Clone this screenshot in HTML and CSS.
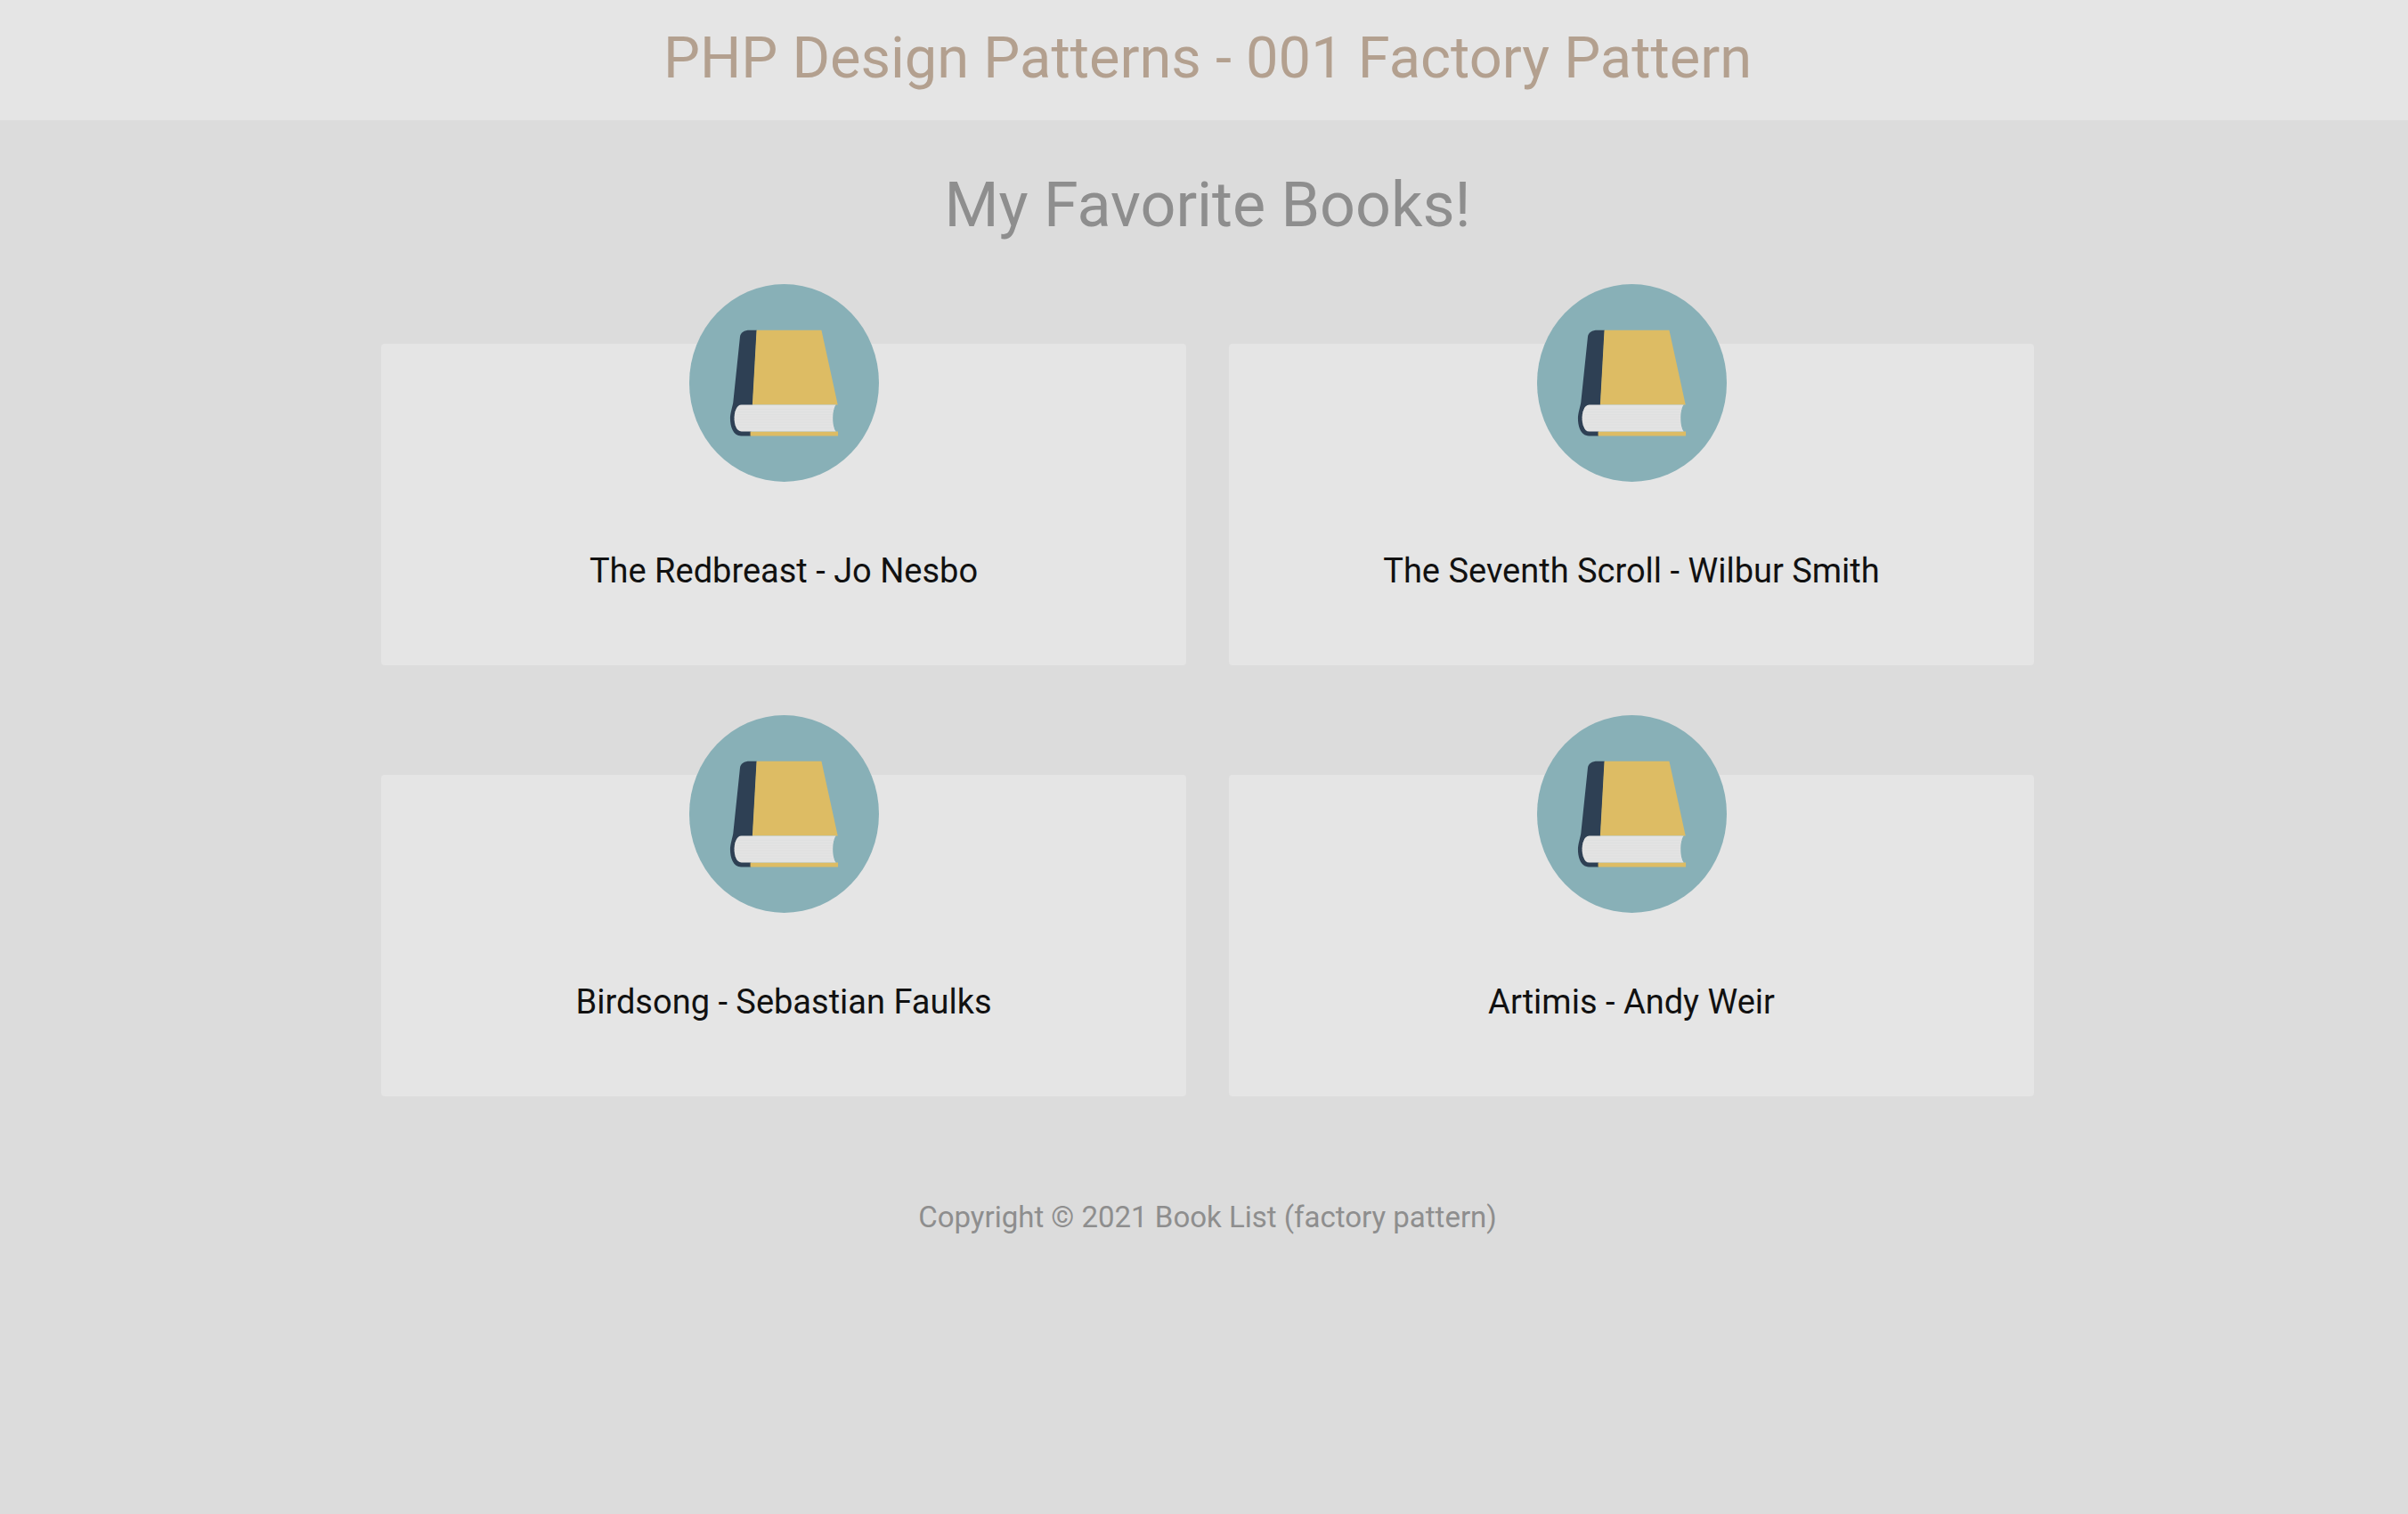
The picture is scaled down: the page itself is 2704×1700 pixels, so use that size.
FILE: index.html
```html
<!DOCTYPE html>
<html lang="en">
<head>
<meta charset="utf-8">
<meta name="viewport" content="width=device-width, initial-scale=1">
<title>PHP Design Patterns - 001 Factory Pattern</title>
<link rel="stylesheet" href="styles.css">
</head>
<body>
<svg class="sprite" aria-hidden="true">
  <symbol id="book" viewBox="42 42 640 668" preserveAspectRatio="none">
    <ellipse cx="362" cy="376" rx="320" ry="334" fill="#88b0b7"/>
    <path d="M246 198H270L256 450L250 555H217C190 555 180 524 180 495C180 479 188 455 190 442L213 222C214 206 228 198 246 198Z" fill="#2e4054"/>
    <path d="M269 198H488L543 450H255Z" fill="#ddbc64"/>
    <path d="M248 540H544V555H248Z" fill="#ddbc64"/>
    <path d="M218 450H537C523 465 523 525 537 540H218C186 540 186 450 218 450Z" fill="#e3e3e3"/>
    <path d="M202 465H530M196 474H528M195 483H526M194 491H525M194 500H525M195 509H526M197 518H528M203 527H531" stroke="#dcdede" stroke-width="2"/>
  </symbol>
</svg>
<header class="site-header">
  <h1 class="site-title">PHP Design Patterns - 001 Factory Pattern</h1>
</header>
<main class="content">
  <h2 class="section-title">My Favorite Books!</h2>
  <ul class="book-grid">
    <li class="book-card"><svg class="book-icon" aria-hidden="true"><use href="#book"/></svg><p class="book-name">The Redbreast - Jo Nesbo</p></li>
    <li class="book-card"><svg class="book-icon" aria-hidden="true"><use href="#book"/></svg><p class="book-name">The Seventh Scroll - Wilbur Smith</p></li>
    <li class="book-card"><svg class="book-icon" aria-hidden="true"><use href="#book"/></svg><p class="book-name">Birdsong - Sebastian Faulks</p></li>
    <li class="book-card"><svg class="book-icon" aria-hidden="true"><use href="#book"/></svg><p class="book-name">Artimis - Andy Weir</p></li>
  </ul>
</main>
<footer class="site-footer">Copyright © 2021 Book List (factory pattern)</footer>
</body>
</html>
```
FILE: styles.css
```css
* {
  box-sizing: border-box;
}

body {
  margin: 0;
  background: #dcdcdc;
  color: #111;
  font-family: Roboto, "Liberation Sans", sans-serif;
}

.sprite {
  position: absolute;
  width: 0;
  height: 0;
}

h1, h2, p, ul {
  margin: 0;
  padding: 0;
  font-weight: 400;
}

.site-header {
  padding: 25px 0 30px 8px;
  background: #e5e5e5;
  text-align: center;
}

.site-title {
  color: #b3a08f;
  font-size: 65px;
  line-height: 80px;
}

.content {
  max-width: 1864px;
  margin: 0 auto;
  padding-left: 8px;
}

.section-title {
  padding-top: 51px;
  color: #8e8e8e;
  font-size: 70px;
  line-height: 88px;
  text-align: center;
}

.book-grid {
  display: grid;
  grid-template-columns: repeat(2, 1fr);
  gap: 123px 48px;
  margin-top: 112px;
  list-style: none;
}

.book-card {
  display: flex;
  flex-direction: column;
  align-items: center;
  padding-bottom: 82px;
  border-radius: 4px;
  background: #e5e5e5;
}

.book-icon {
  width: 213px;
  height: 222px;
  margin-top: -67px;
}

.book-name {
  margin-top: 76px;
  font-size: 38px;
  line-height: 48px;
  text-align: center;
}

.site-footer {
  padding: 112px 0 40px 8px;
  color: #8e8e8e;
  font-size: 33px;
  line-height: 48px;
  text-align: center;
}
```
